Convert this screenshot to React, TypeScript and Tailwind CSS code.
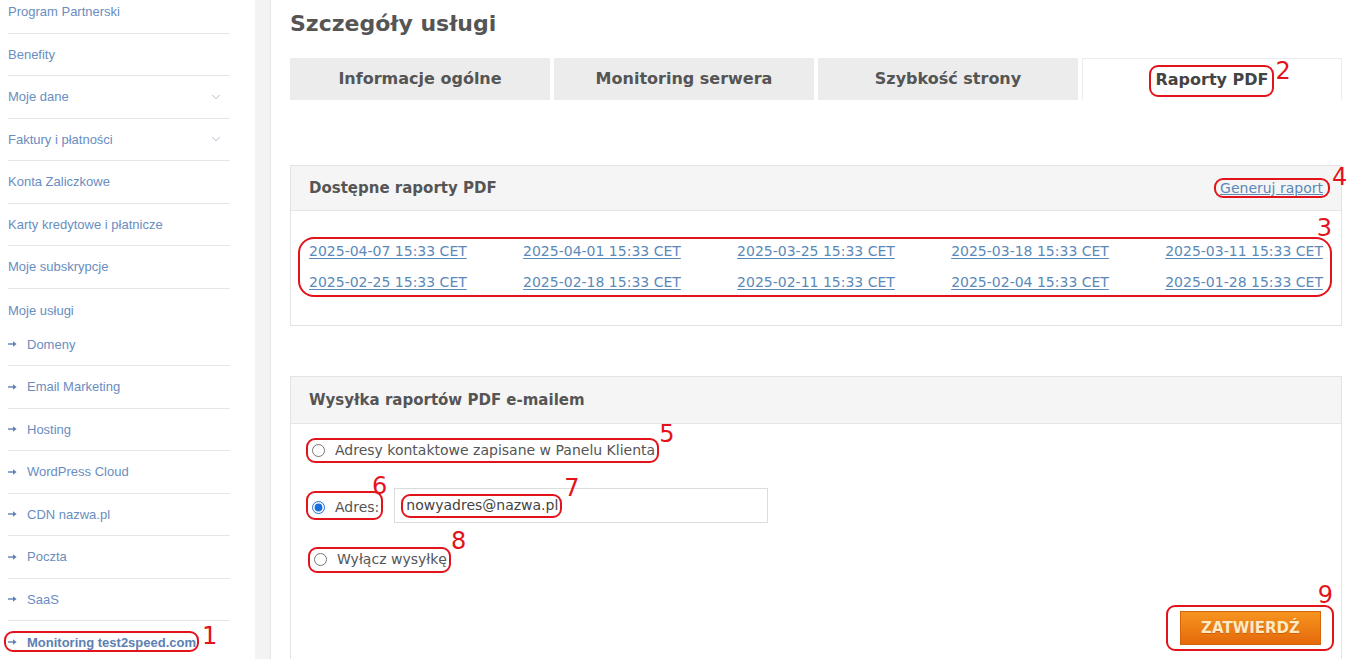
import { ChevronDown } from "lucide-react";
import type { ReactNode } from "react";

const RED = "#e3131c";

// red hand-drawn style annotation around an element
function Mark({ children, box, num, numClass }: { children: ReactNode; box: string; num: string; numClass: string }) {
  return (
    <span className="relative inline-flex items-center">
      {children}
      <span className={`pointer-events-none absolute rounded-[9px] border-2 border-[#e3131c] ${box}`} />
      <span
        className={`pointer-events-none absolute text-[24px] font-normal leading-none text-[#e3131c] ${numClass}`}
        style={{ fontFamily: '"DejaVu Sans", sans-serif' }}
      >
        {num}
      </span>
    </span>
  );
}

function SubArrow() {
  return (
    <svg width="9" height="8" viewBox="0 0 9 8" className="shrink-0">
      <path d="M0 4h6" stroke="#5f82b4" strokeWidth="1.4" />
      <path d="M5 1.2 8.6 4 5 6.8z" fill="#5f82b4" />
    </svg>
  );
}

const topItems: { label: string; chevron?: boolean }[] = [
  { label: "Program Partnerski" },
  { label: "Benefity" },
  { label: "Moje dane", chevron: true },
  { label: "Faktury i płatności", chevron: true },
  { label: "Konta Zaliczkowe" },
  { label: "Karty kredytowe i płatnicze" },
  { label: "Moje subskrypcje" },
];

const services = ["Domeny", "Email Marketing", "Hosting", "WordPress Cloud", "CDN nazwa.pl", "Poczta", "SaaS"];

const reports = [
  ["2025-04-07 15:33 CET", "2025-04-01 15:33 CET", "2025-03-25 15:33 CET", "2025-03-18 15:33 CET", "2025-03-11 15:33 CET"],
  ["2025-02-25 15:33 CET", "2025-02-18 15:33 CET", "2025-02-11 15:33 CET", "2025-02-04 15:33 CET", "2025-01-28 15:33 CET"],
];

function Sidebar() {
  return (
    <aside
      className="w-[255px] shrink-0 bg-white text-[13px] text-[#6a8dbf]"
      style={{ fontFamily: '"Liberation Sans", Arial, sans-serif' }}
    >
      <div className="-mt-[9px]">
        {topItems.map((it) => (
          <div key={it.label} className="ml-[8px] flex h-[42.5px] w-[222px] items-center justify-between border-b border-[#e6e6e6]">
            <span>{it.label}</span>
            {it.chevron && <ChevronDown size={14} strokeWidth={1.2} className="mr-[7px] text-[#8c9fb8]" />}
          </div>
        ))}
        <div className="ml-[8px] flex h-[35px] w-[222px] items-start pt-[12px]">
          <span>Moje usługi</span>
        </div>
        {services.map((s) => (
          <div key={s} className="ml-[8px] flex h-[42.5px] w-[222px] items-center gap-[10px] border-b border-[#e6e6e6]">
            <SubArrow />
            <span>{s}</span>
          </div>
        ))}
        <div className="ml-[8px] flex h-[42.5px] w-[222px] items-center">
          <Mark box="-left-[4px] -right-[3px] -top-[3px] -bottom-[2px]" num="1" numClass="left-full ml-[6px] -top-[10px]">
            <span className="flex h-[16px] items-center gap-[10px] font-bold text-[#5c80b2]">
              <SubArrow />
              <span>Monitoring test2speed.com</span>
            </span>
          </Mark>
        </div>
      </div>
    </aside>
  );
}

function Radio({ checked = false }: { checked?: boolean }) {
  return (
    <input
      type="radio"
      name="send"
      defaultChecked={checked}
      className="m-0 h-[13px] w-[13px] shrink-0 accent-[#1a6fdc]"
    />
  );
}

export default function App() {
  return (
    <div className="flex h-[659px] w-[1346px] overflow-hidden bg-[#f3f3f3]">
      <Sidebar />
      <div className="w-[15px] shrink-0 bg-[#f3f3f3]" />
      <main
        className="flex-1 border-l border-[#e6e6e6] bg-white pl-[19px] pr-[4px] text-[#555]"
        style={{ fontFamily: '"DejaVu Sans", Verdana, sans-serif' }}
      >
        <h1 className="pt-[9px] text-[22px] font-bold leading-[30px] text-[#555]">Szczegóły usługi</h1>

        {/* tabs */}
        <div className="mt-[19px] grid h-[42px] grid-cols-4 gap-[4px] text-[16px] font-bold">
          <div className="flex items-center justify-center bg-[#ececec]">Informacje ogólne</div>
          <div className="flex items-center justify-center bg-[#ececec]">Monitoring serwera</div>
          <div className="flex items-center justify-center bg-[#ececec]">Szybkość strony</div>
          <div className="flex items-center justify-center border-x border-t border-[#ececec] bg-white">
            <Mark box="-left-[6px] -right-[5px] -top-[3px] -bottom-[5px]" num="2" numClass="left-full ml-[7px] -top-[9px]">
              <span className="text-[#444]">Raporty PDF</span>
            </Mark>
          </div>
        </div>

        {/* available reports */}
        <section className="mt-[65px] border border-[#e3e3e3]">
          <div className="flex h-[45px] items-center justify-between border-b border-[#e6e6e6] bg-[#f5f5f5] px-[18px]">
            <h2 className="text-[15px] font-bold">Dostępne raporty PDF</h2>
            <Mark box="-left-[6px] -right-[7px] -top-[1px] -bottom-[1px]" num="4" numClass="left-full ml-[9px] -top-[14px]">
              <a className="text-[14px] leading-[18px] text-[#5b89b8] underline">Generuj raport</a>
            </Mark>
          </div>
          <div className="px-[18px] pb-[33px] pt-[30px]">
            <div className="relative flex flex-col gap-[11px]">
              {reports.map((row, i) => (
                <div key={i} className="flex justify-between">
                  {row.map((d) => (
                    <a key={d} className="text-[14px] leading-[20px] text-[#5b89b8] underline underline-offset-2">
                      {d}
                    </a>
                  ))}
                </div>
              ))}
              <span className="pointer-events-none absolute -bottom-[5px] -left-[11px] -right-[9px] -top-[4px] rounded-[16px] border-2 border-[#e3131c]" />
              <span
                className="pointer-events-none absolute -right-[9px] -top-[25px] text-[24px] leading-none"
                style={{ color: RED }}
              >
                3
              </span>
            </div>
          </div>
        </section>

        {/* e-mail sending */}
        <section className="mt-[50px] h-[400px] border border-[#e3e3e3]">
          <div className="flex h-[47px] items-center border-b border-[#e6e6e6] bg-[#f5f5f5] px-[18px]">
            <h2 className="text-[15px] font-bold">Wysyłka raportów PDF e-mailem</h2>
          </div>
          <div className="flex flex-col pl-[21px] pr-[20px] pt-[16px] text-[14px]">
            <div className="flex h-[20px] items-center">
              <Mark box="-left-[6px] -right-[4px] -top-[2px] -bottom-[2px]" num="5" numClass="left-full ml-[4px] -top-[18px]">
                <label className="flex items-center gap-[10px]">
                  <Radio />
                  <span>Adresy kontaktowe zapisane w Panelu Klienta</span>
                </label>
              </Mark>
            </div>
            <div className="mt-[28px] flex h-[35px] items-center gap-[15px]">
              <Mark box="-left-[6px] -right-[4px] -top-[2px] -bottom-[2px]" num="6" numClass="-right-[8px] -top-[19px]">
                <label className="flex items-center gap-[10px] pt-[4px]">
                  <Radio checked />
                  <span>Adres:</span>
                </label>
              </Mark>
              <div className="flex h-[35px] w-[374px] items-center border border-[#dcdcdc] bg-white pl-[11px]">
                <Mark box="-left-[5px] -right-[4px] -top-[1px] -bottom-[2px]" num="7" numClass="left-full ml-[6px] -top-[19px]">
                  <span className="text-[#444]">nowyadres@nazwa.pl</span>
                </Mark>
              </div>
            </div>
            <div className="mt-[26px] flex h-[20px] items-center pl-[2px]">
              <Mark box="-left-[6px] -right-[4px] -top-[2px] -bottom-[3px]" num="8" numClass="left-full ml-[4px] -top-[20px]">
                <label className="flex items-center gap-[10px]">
                  <Radio />
                  <span>Wyłącz wysyłkę</span>
                </label>
              </Mark>
            </div>
            <div className="mt-[42px] flex justify-end">
              <Mark box="-left-[14px] -right-[13px] -top-[6px] -bottom-[6px]" num="9" numClass="-right-[12px] -top-[28px]">
                <button className="flex h-[34px] w-[141px] items-center justify-center border border-[#d4650c] bg-gradient-to-b from-[#f7941f] to-[#e4690a] text-[15px] font-bold text-[#fdeac4] [text-shadow:0_1px_0_rgba(150,60,0,0.4)]">
                  ZATWIERDŹ
                </button>
              </Mark>
            </div>
          </div>
        </section>
      </main>
    </div>
  );
}
